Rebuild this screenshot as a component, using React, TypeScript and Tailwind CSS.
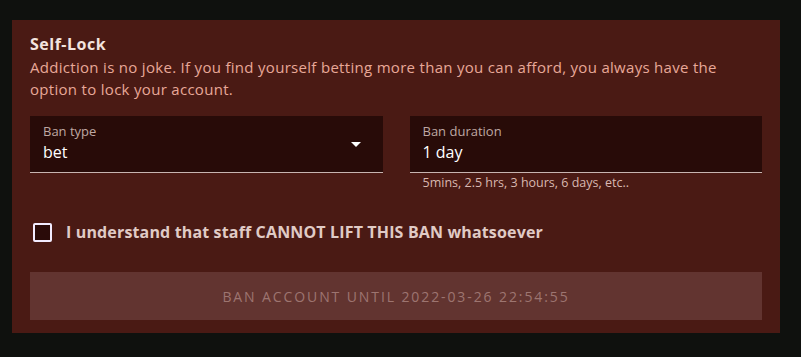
import React from "react";

export default function App() {
  return (
    <div className="w-[801px] h-[357px] bg-[#0f110e] pt-[20px] pl-[12px]" style={{ fontFamily: "'Open Sans', 'Noto Sans', sans-serif" }}>
      <div className="w-[768px] h-[313px] bg-[#4a1a14] px-[18px] pt-[14px]">
        <div className="text-[16px] font-bold text-[#f3e4df] leading-[21px] tracking-[0.5px]">Self-Lock</div>
        <div className="text-[15px] text-[#e8a898] leading-[22px] mt-[1px] tracking-[0.3px]">
          Addiction is no joke. If you find yourself betting more than you can afford, you always have the option to lock your account.
        </div>
        <div className="flex gap-[27px] mt-[16px]">
          <div className="w-[353px]">
            <div className="h-[57px] bg-[#280b08] border-b border-[#c8b4b0] px-[13px] pt-[7px] relative">
              <div className="text-[13px] text-[#bfa8a3] leading-[16px]">Ban type</div>
              <div className="text-[16px] text-white leading-[24px] mt-[1px]">bet</div>
              <svg className="absolute right-[22px] top-[26px]" width="10" height="5" viewBox="0 0 10 5"><path d="M0 0h10L5 5z" fill="#fff" /></svg>
            </div>
          </div>
          <div className="w-[353px]">
            <div className="h-[57px] bg-[#280b08] border-b border-[#c8b4b0] px-[13px] pt-[7px]">
              <div className="text-[13px] text-[#bfa8a3] leading-[16px]">Ban duration</div>
              <div className="text-[16px] text-white leading-[24px] mt-[1px]">1 day</div>
            </div>
            <div className="text-[12.5px] text-[#d9b8b0] px-[13px] mt-[2px] leading-[15px]">5mins, 2.5 hrs, 3 hours, 6 days, etc..</div>
          </div>
        </div>
        <label className="flex items-center gap-[14px] mt-[32px] ml-[3px]">
          <span className="w-[19px] h-[19px] border-2 border-[#f3ecff] rounded-[2px] bg-[#2a0b09]" />
          <span className="text-[16px] font-bold text-[#e0cbc6] leading-[20px] tracking-[0.15px]">I understand that staff CANNOT LIFT THIS BAN whatsoever</span>
        </label>
        <div className="mt-[30px] h-[48px] bg-[#623430] flex items-center justify-center text-[14px] tracking-[1.9px] text-[#9d7570]">
          BAN ACCOUNT UNTIL 2022-03-26 22:54:55
        </div>
      </div>
    </div>
  );
}
